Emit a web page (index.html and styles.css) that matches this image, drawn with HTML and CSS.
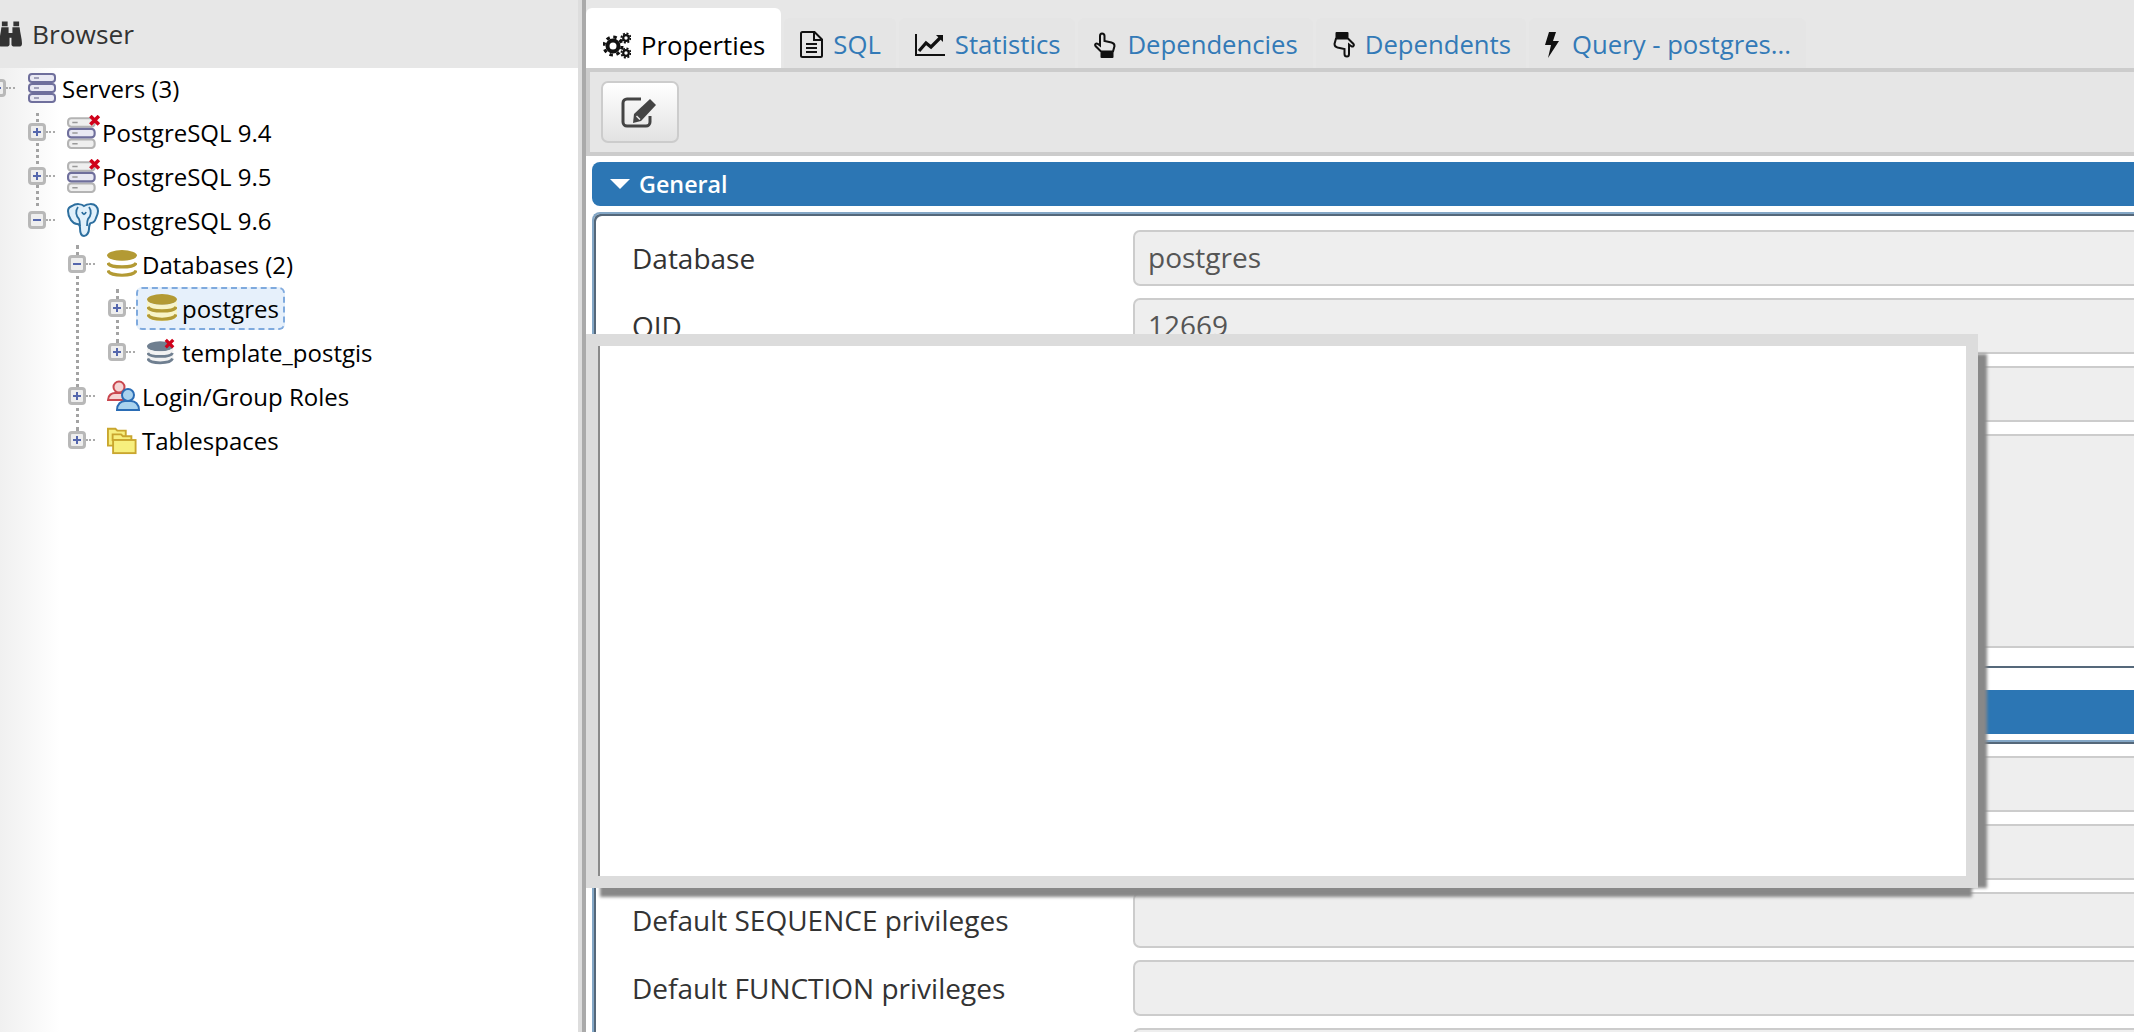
FILE: index.html
```html
<!DOCTYPE html>
<html lang="en">
<head>
<meta charset="utf-8">
<title>pgAdmin</title>
<link rel="stylesheet" href="styles.css">
</head>
<body>
<svg class="defs" width="0" height="0" aria-hidden="true">
  <symbol id="srv" viewBox="0 0 28 30">
    <g fill="#e9e9f3" stroke="#6f6f9c" stroke-width="2">
      <rect x="1" y="1" width="26" height="8" rx="3"/><rect x="1" y="11" width="26" height="8" rx="3"/><rect x="1" y="21" width="26" height="8" rx="3"/>
    </g>
    <path d="M6 5h5M6 15h5M6 25h5" stroke="#8a8aa8" stroke-width="1.5"/>
  </symbol>
  <symbol id="srv-off" viewBox="0 0 32 32">
    <g fill="#efefef" stroke="#b4b4b4" stroke-width="2">
      <rect x="1" y="3" width="25" height="8" rx="3"/><rect x="1" y="23" width="25" height="8" rx="3"/>
    </g>
    <rect x="1" y="13" width="25" height="8" rx="3" fill="#e9e9f3" stroke="#6f6f9c" stroke-width="2"/>
    <path d="M5 7h5M5 17h5M5 27h5" stroke="#999" stroke-width="1.5"/>
    <path d="M22 1l8 8M30 1l-8 8" stroke="#d0021b" stroke-width="3.4"/>
  </symbol>
  <symbol id="db" viewBox="0 0 28 26">
    <ellipse cx="14" cy="5" rx="14" ry="5" fill="currentColor"/>
    <path d="M0 5v15c0 7 28 7 28 0V5c0 7-28 7-28 0z" fill="var(--db-fill)"/>
    <path d="M.8 12c2 5 24.400 5 26.400 0M.8 19c2 6 24.400 6 26.400 0" fill="none" stroke="currentColor" stroke-width="3"/>
  </symbol>
</svg>

<div class="app">
  <aside class="browser">
    <header class="browser-head">
      <svg class="binoculars" viewBox="0 0 24 26"><path d="M3 0h6v5H3zM15 0h6v5h-6zM2.500 6H10v6h4V6h7.500C22 12 24 18 24 23c0 2-1 3-2 3h-7c-1 0-2-1-2-2v-7h-2v7c0 1-1 2-2 2H2c-1 0-2-1-2-3C0 18 2 12 2.500 6z" fill="#333"/></svg>
      <span>Browser</span>
    </header>
    <ul class="tree">
      <li>
        <div class="row"><span class="exp minus"></span><span class="node"><svg class="ico"><use href="#srv"/></svg><span>Servers (3)</span></span></div>
        <ul class="branch servers">
          <li><div class="row"><span class="exp plus"></span><span class="node"><svg class="ico ico-lg"><use href="#srv-off"/></svg><span>PostgreSQL 9.4</span></span></div></li>
          <li><div class="row"><span class="exp plus"></span><span class="node"><svg class="ico ico-lg"><use href="#srv-off"/></svg><span>PostgreSQL 9.5</span></span></div></li>
          <li>
            <div class="row"><span class="exp minus"></span><span class="node"><svg class="ico ico-lg" viewBox="0 0 32 34"><path d="M4 3c4-3 10-2 12 0 3-2 9-3 12 0 3 3 2 8 0 12-1 3-3 5-5 5-1 0-2 3-2 6 0 3-2 7-5 7s-4-4-4-8c0-2-1-4-3-4-4 0-9-6-9-13 0-2 1-4 4-5z" fill="#e0f0fb" stroke="#2d6f9f" stroke-width="2"/><path d="M10 4C7 8 8 13 11 16c1 2 1 4 1 7M21 4c3 4 2 9-1 12-1 2-1 4-1 7M14 9c1 3 3 3 4 0" fill="none" stroke="#2d6f9f" stroke-width="1.800"/></svg><span>PostgreSQL 9.6</span></span></div>
            <ul class="branch objects">
              <li>
                <div class="row"><span class="exp minus"></span><span class="node"><svg class="ico db-gold"><use href="#db"/></svg><span>Databases (2)</span></span></div>
                <ul class="branch databases">
                  <li><div class="row"><span class="exp plus"></span><span class="node selected"><svg class="ico db-live"><use href="#db"/></svg><span>postgres</span></span></div></li>
                  <li><div class="row"><span class="exp plus"></span><span class="node"><svg class="ico" viewBox="0 0 32 28"><ellipse cx="14" cy="8" rx="14" ry="5.500" fill="#6f7f90"/><path d="M0 8v13c0 7 28 7 28 0V8c0 7-28 7-28 0z" fill="#f2f2f2"/><path d="M.8 15c2 5 24.400 5 26.400 0M.8 21c2 6 24.400 6 26.400 0" fill="none" stroke="#6f7f90" stroke-width="3"/><path d="M20 1l8 8M28 1l-8 8" stroke="#d0021b" stroke-width="3.400"/></svg><span>template_postgis</span></span></div></li>
                </ul>
              </li>
              <li><div class="row"><span class="exp plus"></span><span class="node"><svg class="ico ico-lg" viewBox="0 0 34 32"><circle cx="12" cy="7" r="5.500" fill="#f5d5d5" stroke="#c9474f" stroke-width="2"/><path d="M1 20c0-5 4-7 7-7h8c3 0 6 2 6 7z" fill="#f5d5d5" stroke="#c9474f" stroke-width="2"/><circle cx="21" cy="15" r="6" fill="#a9d2ee" stroke="#2a6cb5" stroke-width="2"/><path d="M10 30c0-6 4-9 8-9h6c4 0 8 3 8 9z" fill="#a9d2ee" stroke="#2a6cb5" stroke-width="2"/></svg><span>Login/Group Roles</span></span></div></li>
              <li><div class="row"><span class="exp plus"></span><span class="node"><svg class="ico" viewBox="0 0 32 30"><path d="M1 3h8l2 2h9v16H1z" fill="#f7ef7e" stroke="#c9a62e" stroke-width="2"/><path d="M6 9h9l2 2h9v4H6z" fill="#f7ef7e" stroke="#c9a62e" stroke-width="2"/><rect x="6.500" y="15" width="24" height="14" fill="#f7ef7e" stroke="#c9a62e" stroke-width="2"/></svg><span>Tablespaces</span></span></div></li>
            </ul>
          </li>
        </ul>
      </li>
    </ul>
  </aside>

  <div class="splitter"></div>

  <main class="content">
    <nav class="tabs">
      <a class="tab active"><svg class="tab-ico gears" viewBox="0 0 28 27"><circle cx="10" cy="14" r="5.500" fill="none" stroke="#111" stroke-width="4"/><circle cx="10" cy="14" r="9" fill="none" stroke="#111" stroke-width="3" stroke-dasharray="3.500 3.570"/><circle cx="23" cy="6" r="2.800" fill="none" stroke="#111" stroke-width="2.200"/><circle cx="23" cy="6" r="4.600" fill="none" stroke="#111" stroke-width="1.800" stroke-dasharray="2 1.600"/><circle cx="23" cy="21" r="2.800" fill="none" stroke="#111" stroke-width="2.200"/><circle cx="23" cy="21" r="4.600" fill="none" stroke="#111" stroke-width="1.800" stroke-dasharray="2 1.600"/></svg><span>Properties</span></a>
      <a class="tab"><svg class="tab-ico file" viewBox="0 0 23 27"><path d="M2.500 1h12l7.500 7.500V24.500a1.500 1.500 0 0 1-1.500 1.500h-18a1.500 1.500 0 0 1-1.500-1.500V2.500A1.500 1.500 0 0 1 2.500 1z" fill="none" stroke="#111" stroke-width="2"/><path d="M14 1v8h8M6 13h11M6 17h11M6 21h11" fill="none" stroke="#111" stroke-width="2"/></svg><span>SQL</span></a>
      <a class="tab"><svg class="tab-ico chart" viewBox="0 0 30 22"><path d="M1 0v21h29" fill="none" stroke="#111" stroke-width="2"/><path d="M4 17l7-8 5 4 9-9" fill="none" stroke="#111" stroke-width="3.200"/><path d="M21 1h7v7z" fill="#111"/></svg><span>Statistics</span></a>
      <a class="tab"><svg class="tab-ico hand" viewBox="0 0 23 26"><path d="M8 1.500c1.400 0 2.500 1 2.500 2.500v5l7 1.500c2 .5 3 1.700 3 3.500l-1.500 5.500H7L1.500 14c-1-1.500.5-3.300 2.200-2.200L6 13.500V4c0-1.400.8-2.500 2-2.500z" fill="none" stroke="#111" stroke-width="2"/><rect x="6.500" y="20" width="13" height="6" rx="1" fill="#111"/></svg><span>Dependencies</span></a>
      <a class="tab"><svg class="tab-ico hand" viewBox="0 0 23 26"><g transform="rotate(180 11.500 13)"><path d="M8 1.500c1.400 0 2.500 1 2.500 2.500v5l7 1.500c2 .5 3 1.700 3 3.500l-1.500 5.500H7L1.500 14c-1-1.500.5-3.300 2.200-2.200L6 13.500V4c0-1.400.8-2.500 2-2.500z" fill="none" stroke="#111" stroke-width="2"/><rect x="6.500" y="20" width="13" height="6" rx="1" fill="#111"/></g></svg><span>Dependents</span></a>
      <a class="tab"><svg class="tab-ico bolt" viewBox="0 0 14 26"><path d="M4 0h7L8 9h6L3 26l3-13H0z" fill="#111"/></svg><span>Query - postgres...</span></a>
    </nav>
    <div class="toolbar">
      <button class="edit-btn" type="button" aria-label="Edit"><svg class="edit-ico" viewBox="0 0 38 32"><path d="M20 3H6a4 4 0 0 0-4 4v19a4 4 0 0 0 4 4h19a4 4 0 0 0 4-4v-6" fill="none" stroke="#444" stroke-width="3"/><path d="M13 18L29 3l6 6-15 16-8 2z" fill="#444"/><path d="M15.500 20l3.500 3.500" stroke="#e9e9e9" stroke-width="1.500"/></svg></button>
    </div>
    <div class="panel">
      <h2 class="section-head"><span class="caret"></span>General</h2>
      <section class="fieldset first">
        <div class="form-row"><label>Database</label><div class="field">postgres</div></div>
        <div class="form-row"><label>OID</label><div class="field">12669</div></div>
        <div class="form-row"><label></label><div class="field"></div></div>
        <div class="form-row"><label></label><div class="field tall"></div></div>
      </section>
      <h2 class="section-head lower"></h2>
      <section class="fieldset">
        <div class="form-row"><label></label><div class="field"></div></div>
        <div class="form-row"><label></label><div class="field"></div></div>
        <div class="form-row"><label>Default SEQUENCE privileges</label><div class="field"></div></div>
        <div class="form-row"><label>Default FUNCTION privileges</label><div class="field"></div></div>
        <div class="form-row"><label></label><div class="field"></div></div>
      </section>
    </div>
  </main>
</div>

<div class="modal"><div class="modal-body"></div></div>
</body>
</html>
```

FILE: styles.css
```css
* { box-sizing: border-box; }
html, body { margin: 0; height: 100%; overflow: hidden; background: #fff; }
body { font-family: "Open Sans", "Liberation Sans", sans-serif; color: #000; position: relative; }
.defs { position: absolute; }

.app { display: grid; grid-template-columns: 578px 8px 1fr; width: 2134px; height: 1032px; overflow: hidden; }

/* left panel */
.browser { background: linear-gradient(to right, #f0f0f0, #fff 60px); overflow: hidden; }
.browser-head { height: 68px; background: #e7e7e7; display: flex; align-items: center; gap: 10px; font-size: 26.300px; color: #333; }
.binoculars { width: 23px; height: 26px; margin-left: -1px; }
.tree, .tree ul { list-style: none; margin: 0; padding: 0; }
.tree { margin: -2px 0 0 -12px; font-size: 24px; }
.tree li { position: relative; }
.tree .branch { padding-left: 40px; position: relative; }
.branch::before { content: ""; position: absolute; left: 48px; top: 3px; border-left: 3px dotted #a3a3a3; }
.branch.servers::before { height: 93px; }
.branch.objects::before { height: 186px; }
.branch.databases::before { height: 54px; }
.row { display: flex; align-items: center; height: 44px; }
.exp { position: relative; flex: none; width: 18px; height: 18px; margin-right: 10px; background: #eee; border: 3px solid #b8b8b8; border-radius: 4px; z-index: 1; }
.exp::before { content: ""; position: absolute; left: 2px; right: 2px; top: 5px; height: 2px; background: #5567ad; }
.exp.plus::after { content: ""; position: absolute; top: 2px; bottom: 2px; left: 5px; width: 2px; background: #5567ad; }
.node { display: flex; align-items: center; gap: 5px; height: 43px; padding: 0 4px 0 9px; border: 2px dashed transparent; border-radius: 6px; white-space: nowrap; position: relative; }
.node::before { content: ""; position: absolute; left: -12px; top: 18px; width: 9px; border-top: 2px dotted #aaa; }
.node.selected { background: #e6f0fb; border-color: #7faade; }
.ico { width: 30px; height: 30px; flex: none; }
.ico-lg { width: 34px; height: 34px; margin-right: -4px; }
.db-gold { color: #b39a34; --db-fill: #fff; }
.db-live { color: #b39a34; --db-fill: #f8f4c8; }

/* splitter */
.splitter { background: #ddd; border-right: 4px solid #aaa; }

/* right panel */
.content { min-width: 0; overflow: hidden; }
.tabs { height: 68px; background: #e7e7e7; display: flex; align-items: flex-end; gap: 3px; }
.tab { display: flex; align-items: center; gap: 10px; height: 50px; padding: 3px 15px 0 16px; background: #e5e5e5; border-radius: 6px 6px 0 0; color: #337ab7; font-size: 25.700px; white-space: nowrap; }
.tab.active { height: 60px; padding: 15px 16px 0 17px; background: #fff; color: #000; }
.tab-ico { flex: none; }
.gears { width: 28px; height: 27px; }
.file { width: 23px; height: 27px; }
.chart { width: 30px; height: 22px; }
.hand { width: 23px; height: 26px; }
.bolt { width: 14px; height: 26px; margin-right: 3px; }

.toolbar { height: 88px; background: #e6e6e6; border: 4px solid #ccc; border-right: 0; padding: 9px 11px; }
.edit-btn { display: flex; align-items: center; justify-content: center; width: 78px; height: 62px; padding: 0; background: linear-gradient(#fff, #e2e2e2); border: 2px solid #ccc; border-radius: 7px; }
.edit-ico { width: 38px; height: 32px; }

.panel { padding: 6px 0 0 6px; margin-right: -12px; }
.section-head { display: flex; align-items: center; height: 44px; margin: 0; padding-left: 18px; gap: 9px; background: #2c76b4; border-radius: 8px 0 0 8px; color: #fff; font-size: 23.300px; font-weight: 600; }
.section-head.lower { margin-top: 22px; }
.caret { width: 0; height: 0; border: 10px solid transparent; border-top-color: #fff; border-bottom-width: 0; }
.fieldset { margin-top: 6px; padding: 14px 0 0 38px; border: 2px solid #84a7c6; border-bottom-color: #55687a; border-right: 0; border-radius: 8px 0 0 8px; box-shadow: inset 2px 2px 0 #55687a; display: flex; flex-direction: column; gap: 12px; }
.fieldset.first { height: 456px; padding-top: 16px; }
.form-row { display: flex; align-items: center; flex: none; }
.form-row label { width: 501px; flex: none; font-size: 28px; color: #333; white-space: nowrap; }
.field { flex: 1; height: 56px; padding: 0 13px; background: #eee; border: 2px solid #ccc; border-radius: 7px; color: #555; font-size: 28px; line-height: 50px; }
.field.tall { height: 214px; }

/* dialog over the page */
.modal { position: absolute; left: 586px; top: 334px; width: 1392px; height: 554px; padding: 12px; background: #dcdcdc; box-shadow: 19px 10px 3px -10px #888, 4px 19px 3px -10px #888; }
.modal-body { height: 100%; background: #fff; border-left: 2px solid #8a8a8a; }
```
